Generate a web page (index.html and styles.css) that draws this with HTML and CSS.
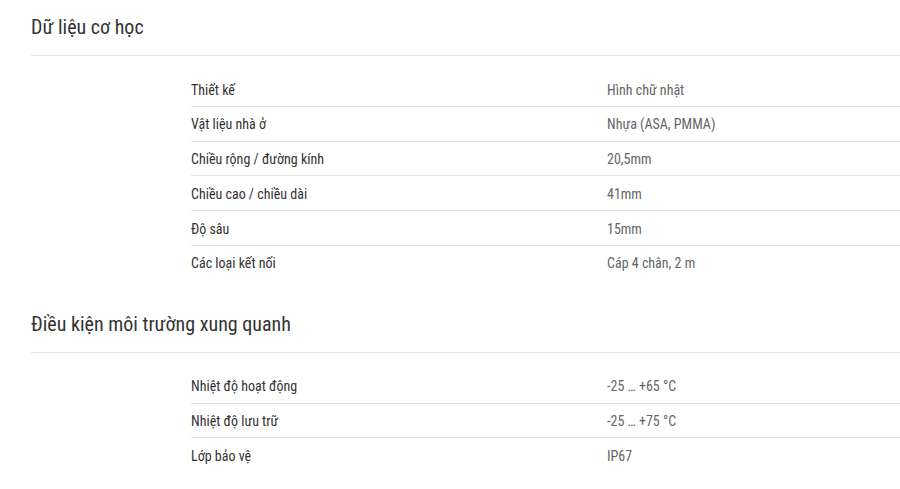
FILE: index.html
```html
<!DOCTYPE html>
<html lang="vi">
<head>
<meta charset="utf-8">
<title>Thông số kỹ thuật</title>
<link rel="stylesheet" href="styles.css">
</head>
<body>
<div class="page">
  <section class="section">
    <h2 class="section-title">Dữ liệu cơ học</h2>
    <table class="spec">
      <tr><td class="label">Thiết kế</td><td class="value">Hình chữ nhật</td></tr>
      <tr><td class="label">Vật liệu nhà ở</td><td class="value">Nhựa (ASA, PMMA)</td></tr>
      <tr><td class="label">Chiều rộng / đường kính</td><td class="value">20,5mm</td></tr>
      <tr><td class="label">Chiều cao / chiều dài</td><td class="value">41mm</td></tr>
      <tr><td class="label">Độ sâu</td><td class="value">15mm</td></tr>
      <tr><td class="label">Các loại kết nối</td><td class="value">Cáp 4 chân, 2 m</td></tr>
    </table>
  </section>
  <section class="section">
    <h2 class="section-title">Điều kiện môi trường xung quanh</h2>
    <table class="spec">
      <tr><td class="label">Nhiệt độ hoạt động</td><td class="value">-25 … +65 °C</td></tr>
      <tr><td class="label">Nhiệt độ lưu trữ</td><td class="value">-25 … +75 °C</td></tr>
      <tr><td class="label">Lớp bảo vệ</td><td class="value">IP67</td></tr>
    </table>
  </section>
</div>
</body>
</html>
```
FILE: styles.css
```css
html, body {
  margin: 0;
  padding: 0;
  background: #fff;
}
body {
  font-family: "Roboto Condensed", Roboto, sans-serif;
  color: #333;
  overflow: hidden;
}
.page {
  padding: 13px 0 0 31px;
}
.section-title {
  margin: 0;
  font-size: 20px;
  font-weight: 400;
  line-height: 28px;
  color: #333;
  padding-bottom: 14px;
  border-bottom: 1px solid #e3e3e3;
}
.section + .section {
  margin-top: 30px;
}
.spec {
  border-collapse: collapse;
  margin: 16px 0 0 160px;
  width: calc(100% - 160px);
  font-size: 14px;
}
.spec td {
  padding: 8.5px 0 5.5px;
  line-height: 19.8px;
  vertical-align: top;
}
.spec tr + tr td {
  border-top: 1px solid #e3e3e3;
}
.label {
  width: 416px;
  color: #333;
}
.value {
  color: #666;
}
```
